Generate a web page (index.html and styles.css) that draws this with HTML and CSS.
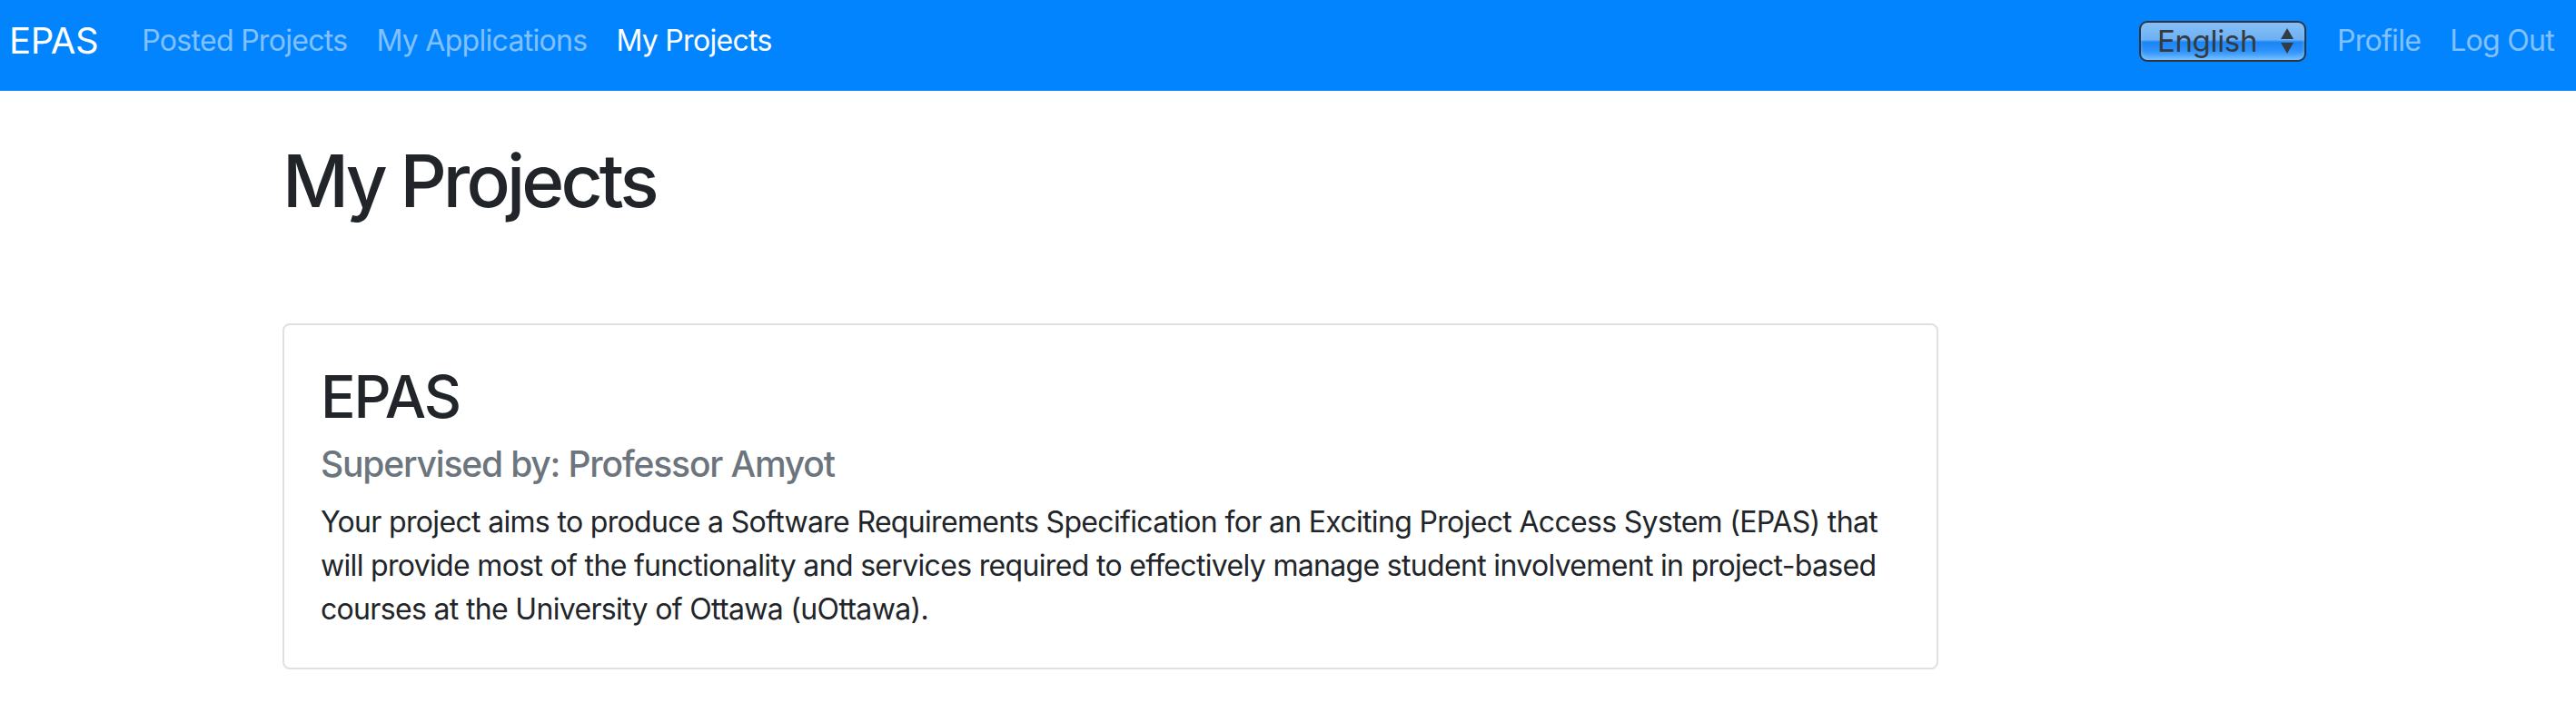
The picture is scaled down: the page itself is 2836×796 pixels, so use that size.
FILE: index.html
```html
<!DOCTYPE html>
<html lang="en">
<head>
<meta charset="utf-8">
<title>My Projects - EPAS</title>
<link rel="stylesheet" href="styles.css">
</head>
<body>
<nav class="navbar">
  <a class="brand" href="#">EPAS</a>
  <ul class="nav-links">
    <li><a class="nav-link" href="#">Posted Projects</a></li>
    <li><a class="nav-link" href="#">My Applications</a></li>
    <li><a class="nav-link active" href="#">My Projects</a></li>
  </ul>
  <div class="nav-right">
    <div class="lang-select">
      <span class="lang-label">English</span>
      <svg class="lang-arrows" width="14" height="28" viewBox="0 0 14 28">
        <polygon points="7,0 14,12 0,12" fill="#333b44"/>
        <polygon points="0,16 14,16 7,28" fill="#333b44"/>
      </svg>
    </div>
    <ul class="nav-links">
      <li><a class="nav-link" href="#">Profile</a></li>
      <li><a class="nav-link" href="#">Log Out</a></li>
    </ul>
  </div>
</nav>
<main class="container">
  <h1 class="page-title">My Projects</h1>
  <div class="card">
    <h2 class="card-title">EPAS</h2>
    <h4 class="card-subtitle">Supervised by: Professor Amyot</h4>
    <p class="card-text">Your project aims to produce a Software Requirements Specification for an Exciting Project Access System (EPAS) that will provide most of the functionality and services required to effectively manage student involvement in project-based courses at the University of Ottawa (uOttawa).</p>
  </div>
</main>
</body>
</html>
```

FILE: styles.css
```css
* { box-sizing: border-box; }
body {
  margin: 0;
  font-family: Inter, "Noto Sans", "Liberation Sans", sans-serif;
  font-size: 32px;
  line-height: 48px;
  letter-spacing: -0.021em;
  color: #212529;
  background: #ffffff;
}
.navbar {
  display: flex;
  align-items: center;
  height: 100px;
  padding: 0 8px 10px 10px;
  background: #0384ff;
}
.brand {
  font-size: 40px;
  line-height: 60px;
  letter-spacing: -0.01em;
  color: #ffffff;
  text-decoration: none;
  margin-right: 32px;
}
.nav-links {
  display: flex;
  list-style: none;
  margin: 0;
  padding: 0;
}
.nav-link {
  display: block;
  padding: 0 16px;
  color: rgba(255, 255, 255, 0.5);
  text-decoration: none;
  font-size: 32px;
  line-height: 48px;
  letter-spacing: -0.022em;
}
.nav-link.active { color: #ffffff; }
.nav-right {
  display: flex;
  align-items: center;
  margin-left: auto;
}
.lang-select {
  display: flex;
  align-items: center;
  justify-content: space-between;
  width: 184px;
  height: 45px;
  margin-right: 18px;
  padding: 0 12px 0 18px;
  border: 2px solid #2d3540;
  border-radius: 9px;
  background: linear-gradient(#88c0f6 0%, #6cb0f4 46%, #1a85f5 52%, #2d92fa 75%, #62b4ff 100%);
  box-shadow: inset 0 -3px 4px rgba(130, 200, 255, 0.6);
}
.lang-label {
  font-size: 33px;
  line-height: 40px;
  letter-spacing: -0.01em;
  color: #343a40;
}
.lang-arrows { display: block; }
.container {
  width: 2214px;
  margin: 0 auto;
}
.page-title {
  margin: 51px 0 109px;
  font-size: 80px;
  line-height: 96px;
  font-weight: 500;
  letter-spacing: -0.048em;
}
.card {
  width: 1823px;
  padding: 40px;
  border: 2px solid #e0e0e0;
  border-radius: 8px;
}
.card-title {
  margin: 0 0 24px;
  font-size: 64px;
  line-height: 77px;
  font-weight: 500;
  letter-spacing: -0.032em;
}
.card-subtitle {
  margin: -12px 0 16px;
  font-size: 39px;
  line-height: 48px;
  font-weight: 500;
  letter-spacing: -0.03em;
  color: #6c757d;
}
.card-text { margin: 0; }
```
